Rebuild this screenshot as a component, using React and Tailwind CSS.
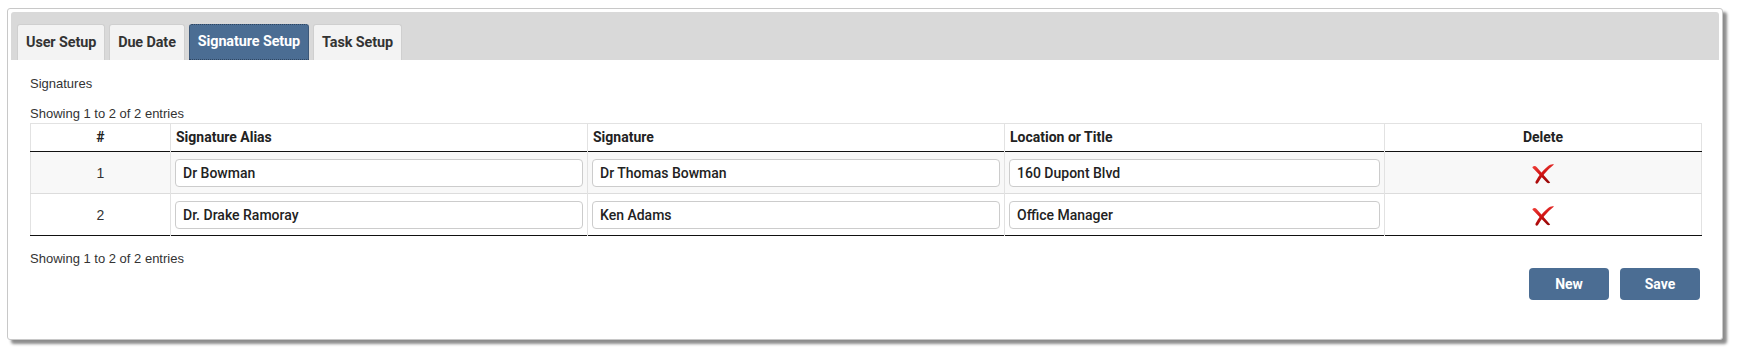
import { useState } from "react";

function DeleteIcon() {
  return (
    <svg width="24" height="22" viewBox="0 0 24 22">
      <defs>
        <linearGradient id="xg" x1="0" y1="0" x2="0.3" y2="1">
          <stop offset="0" stopColor="#f0403a" />
          <stop offset="0.55" stopColor="#d11313" />
          <stop offset="1" stopColor="#9c0808" />
        </linearGradient>
      </defs>
      <path d="M1.5 4 C2.8 2.6 4.6 2.8 5.8 4.2 L19.2 19.6 C18.2 20.6 16.8 20.6 15.9 19.6 L2.8 6 C2 5.2 1.2 4.6 1.5 4 Z" fill="url(#xg)" />
      <path d="M23 1.6 C21.2 0.8 18.8 1.8 16.6 3.6 C11.6 7.8 7.6 12.6 4.6 18.4 C3.9 20 5.4 21.4 6.8 20.2 C10.4 14 15.6 7.4 23 1.6 Z" fill="url(#xg)" />
    </svg>
  );
}

const tabs = ["User Setup", "Due Date", "Signature Setup", "Task Setup"];

export default function App() {
  const [active, setActive] = useState("Signature Setup");
  const [rows, setRows] = useState([
    { alias: "Dr Bowman", signature: "Dr Thomas Bowman", location: "160 Dupont Blvd" },
    { alias: "Dr. Drake Ramoray", signature: "Ken Adams", location: "Office Manager" },
  ]);

  const update = (i, key, value) => {
    const next = rows.slice();
    next[i] = { ...next[i], [key]: value };
    setRows(next);
  };

  const inputCls =
    "w-full h-[28px] border border-[#ccc] rounded-[4px] px-[7px] font-['Roboto',sans-serif] text-[14px] font-medium text-[#222] bg-white focus:outline-none";

  return (
    <div className="bg-white w-[1742px] h-[360px] pt-[8px] pl-[7px] font-['Liberation_Sans',Arial,sans-serif] text-[13px] text-[#333]">
      <div className="w-[1716px] h-[332px] border border-[#c8c8c8] rounded-[3px] bg-white p-[3px] shadow-[4px_4px_3px_rgba(0,0,0,0.45)]">
        <div className="h-[48px] bg-[#d9d9d9] rounded-t-[3px] flex items-end gap-[4px] pl-[6px]">
          {tabs.map((t) => (
            <button
              key={t}
              onClick={() => setActive(t)}
              className={
                "h-[36px] px-[8px] rounded-t-[3px] border font-['Roboto',sans-serif] font-bold text-[14.4px] tracking-[-0.1px] " +
                (t === active
                  ? "bg-[#4b6d93] border-[#2f4560] border-dotted text-white"
                  : "bg-[#f3f3f3] border-[#cfcfcf] border-b-0 text-[#333]")
              }
            >
              {t}
            </button>
          ))}
        </div>

        <div className="pl-[19px] pr-[18px]">
          <p className="mt-[16px] leading-[15px]">Signatures</p>
          <p className="mt-[15px] leading-[15px]">Showing 1 to 2 of 2 entries</p>
          <table className="mt-[2px] w-[1671px] border-collapse border-t border-x border-[#e2e2e2] border-b border-b-[#111] table-fixed">
            <colgroup>
              <col className="w-[140px]" />
              <col className="w-[417px]" />
              <col className="w-[417px]" />
              <col className="w-[380px]" />
              <col className="w-[317px]" />
            </colgroup>
            <thead>
              <tr className="h-[28px] border-b border-[#111] font-['Roboto',sans-serif] font-bold text-[14px] text-[#222]">
                <th className="text-center border-r border-[#e2e2e2] pb-[1px]">#</th>
                <th className="text-left pl-[5px] border-r border-[#e2e2e2] pb-[1px]">Signature Alias</th>
                <th className="text-left pl-[5px] border-r border-[#e2e2e2] pb-[1px]">Signature</th>
                <th className="text-left pl-[5px] border-r border-[#e2e2e2] pb-[1px]">Location or Title</th>
                <th className="text-center pb-[1px]">Delete</th>
              </tr>
            </thead>
            <tbody>
              {rows.map((r, i) => (
                <tr key={i} className={"h-[42px] " + (i === 0 ? "bg-[#f8f8f8] border-b border-[#dcdcdc]" : "bg-white")}>
                  <td className="text-center text-[14px] border-r border-[#e2e2e2] pt-[2px]">{i + 1}</td>
                  <td className="px-[4px] border-r border-[#e2e2e2]">
                    <input className={inputCls} value={r.alias} onChange={(e) => update(i, "alias", e.target.value)} />
                  </td>
                  <td className="px-[4px] border-r border-[#e2e2e2]">
                    <input className={inputCls} value={r.signature} onChange={(e) => update(i, "signature", e.target.value)} />
                  </td>
                  <td className="px-[4px] border-r border-[#e2e2e2]">
                    <input className={inputCls} value={r.location} onChange={(e) => update(i, "location", e.target.value)} />
                  </td>
                  <td>
                    <div className="flex justify-center pt-[2px]">
                      <DeleteIcon />
                    </div>
                  </td>
                </tr>
              ))}
            </tbody>
          </table>
          <p className="mt-[15px] leading-[15px]">Showing 1 to 2 of 2 entries</p>
          <div className="flex justify-end gap-[11px] mt-[2px] pr-[1px]">
            <button className="w-[80px] h-[32px] rounded-[4px] bg-[#4b6d93] text-white font-['Roboto',sans-serif] font-bold text-[14px]">
              New
            </button>
            <button className="w-[80px] h-[32px] rounded-[4px] bg-[#4b6d93] text-white font-['Roboto',sans-serif] font-bold text-[14px]">
              Save
            </button>
          </div>
        </div>
      </div>
    </div>
  );
}
